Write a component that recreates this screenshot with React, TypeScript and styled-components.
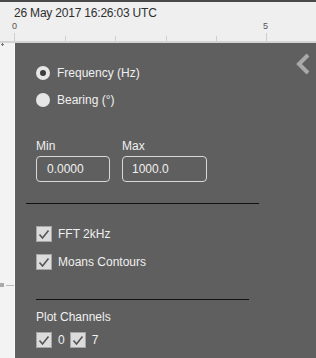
import { FC } from "react";
import styled, { createGlobalStyle } from "styled-components";

const GlobalStyle = createGlobalStyle`
  html, body {
    margin: 0;
    padding: 0;
    background: #efefef;
  }
  body {
    font-family: "Liberation Sans", Arial, sans-serif;
  }
`;

const Screen = styled.div`
  width: 316px;
  height: 358px;
  display: flex;
  flex-direction: column;
  overflow: hidden;
  background: #efefef;
`;

const TopStrip = styled.div`
  height: 2px;
  background: #4a4a4a;
`;

const TimeHeader = styled.div`
  height: 39px;
  position: relative;
  background: #efefef;
  border-bottom: 2px solid #d4d4d4;
`;

const TimeLabel = styled.div`
  position: absolute;
  left: 14px;
  top: 4px;
  font-size: 12px;
  color: #2e2e2e;
  letter-spacing: -0.2px;
`;

const RulerSvg = styled.svg`
  position: absolute;
  left: 0;
  top: 0;
`;

const Body = styled.div`
  flex: 1;
  display: flex;
  min-height: 0;
`;

const SideRuler = styled.div`
  width: 14px;
  position: relative;
  background: #f3f3f3;
  border-right: 1px solid #fafafa;
`;

const Panel = styled.div`
  flex: 1;
  position: relative;
  background: #5f5f5f;
  color: #f0f0f0;
  font-size: 12px;
  padding: 23px 0 0 21px;
`;

const Collapse = styled.svg`
  position: absolute;
  right: 6px;
  top: 10px;
`;

const OptionRow = styled.label`
  display: flex;
  align-items: center;
  gap: 7px;
  height: 14px;
  margin-bottom: 13px;
`;

const Radio = styled.span<{ checked?: boolean }>`
  width: 14px;
  height: 14px;
  border-radius: 50%;
  background: #e6e6e6;
  box-sizing: border-box;
  display: flex;
  align-items: center;
  justify-content: center;
  &::after {
    content: "";
    width: 6px;
    height: 6px;
    border-radius: 50%;
    background: ${(p) => (p.checked ? "#3c3c3c" : "transparent")};
  }
`;

const Fields = styled.div`
  display: flex;
  gap: 12px;
  margin-top: 32px;
`;

const Field = styled.div`
  display: flex;
  flex-direction: column;
  gap: 3px;
`;

const FieldLabel = styled.span`
  font-size: 12px;
  line-height: 14px;
`;

const Input = styled.div<{ width: number }>`
  width: ${(p) => p.width}px;
  height: 26px;
  box-sizing: border-box;
  border: 1px solid #d8d8d8;
  border-radius: 4px;
  display: flex;
  align-items: center;
  padding-left: ${(p) => (p.width < 80 ? 10 : 9)}px;
  font-size: 12px;
`;

const Divider = styled.div<{ left: number; width: number; gap?: number }>`
  height: 1px;
  background: #111;
  margin-top: ${(p) => p.gap ?? 0}px;
  margin-left: ${(p) => p.left}px;
  width: ${(p) => p.width}px;
`;

const CheckList = styled.div`
  display: flex;
  flex-direction: column;
  gap: 12px;
  margin: 22px 0 29px;
`;

const CheckRow = styled.label`
  display: flex;
  align-items: center;
  gap: 6px;
  height: 16px;
`;

const Box = styled.span`
  width: 16px;
  height: 16px;
  box-sizing: border-box;
  background: #dcdcdc;
  border: 1px solid #a6a6a6;
  display: flex;
  align-items: center;
  justify-content: center;
`;

const SectionTitle = styled.div`
  margin-top: 10px;
  line-height: 14px;
`;

const Channels = styled.div`
  display: flex;
  align-items: center;
  gap: 5px;
  margin-top: 8px;
`;

const ChannelNum = styled.span`
  margin-left: 1px;
`;

const Check: FC = () => (
  <Box>
    <svg width="12" height="11" viewBox="0 0 12 11">
      <path d="M1.5 5.5 L4.5 9 L10.5 1.5" fill="none" stroke="#555" strokeWidth="1.6" />
    </svg>
  </Box>
);

const ticks = [14, 65, 115, 166, 216, 266];

const App: FC = () => {
  return (
    <Screen>
      <GlobalStyle />
      <TopStrip />
      <TimeHeader>
        <TimeLabel>26 May 2017 16:26:03 UTC</TimeLabel>
        <RulerSvg width="316" height="39">
          {ticks.map((x, i) => (
            <line
              key={x}
              x1={x + 0.5}
              x2={x + 0.5}
              y1={i === 0 || i === 5 ? 31 : 34}
              y2={39}
              stroke="#cfcfcf"
              strokeWidth="1"
            />
          ))}
          <text x="12" y="27" fontSize="9" fill="#555" fontFamily="Liberation Sans, sans-serif">0</text>
          <text x="263" y="27" fontSize="9" fill="#555" fontFamily="Liberation Sans, sans-serif">5</text>
        </RulerSvg>
      </TimeHeader>
      <Body>
        <SideRuler>
          <svg width="14" height="315">
            <line x1="1" x2="4" y1="1.5" y2="1.5" stroke="#777" />
            <line x1="2.5" x2="2.5" y1="0" y2="3" stroke="#777" />
            <rect x="0" y="240" width="4" height="4" fill="#aaa" />
            <line x1="6" x2="14" y1="242.5" y2="242.5" stroke="#bbb" />
          </svg>
        </SideRuler>
        <Panel>
          <Collapse width="14" height="22" viewBox="0 0 14 22">
            <path d="M12 2 L3 11 L12 20" fill="none" stroke="#a9a9a9" strokeWidth="4" />
          </Collapse>
          <OptionRow>
            <Radio checked />
            Frequency (Hz)
          </OptionRow>
          <OptionRow>
            <Radio />
            Bearing (°)
          </OptionRow>
          <Fields>
            <Field>
              <FieldLabel>Min</FieldLabel>
              <Input width={74}>0.0000</Input>
            </Field>
            <Field>
              <FieldLabel>Max</FieldLabel>
              <Input width={85}>1000.0</Input>
            </Field>
          </Fields>
          <Divider gap={21} left={-10} width={233} />
          <CheckList>
            <CheckRow>
              <Check />
              FFT 2kHz
            </CheckRow>
            <CheckRow>
              <Check />
              Moans Contours
            </CheckRow>
          </CheckList>
          <Divider left={0} width={213} />
          <SectionTitle>Plot Channels</SectionTitle>
          <Channels>
            <Check />
            <ChannelNum>0</ChannelNum>
            <Check />
            <ChannelNum>7</ChannelNum>
          </Channels>
        </Panel>
      </Body>
    </Screen>
  );
};

export default App;
